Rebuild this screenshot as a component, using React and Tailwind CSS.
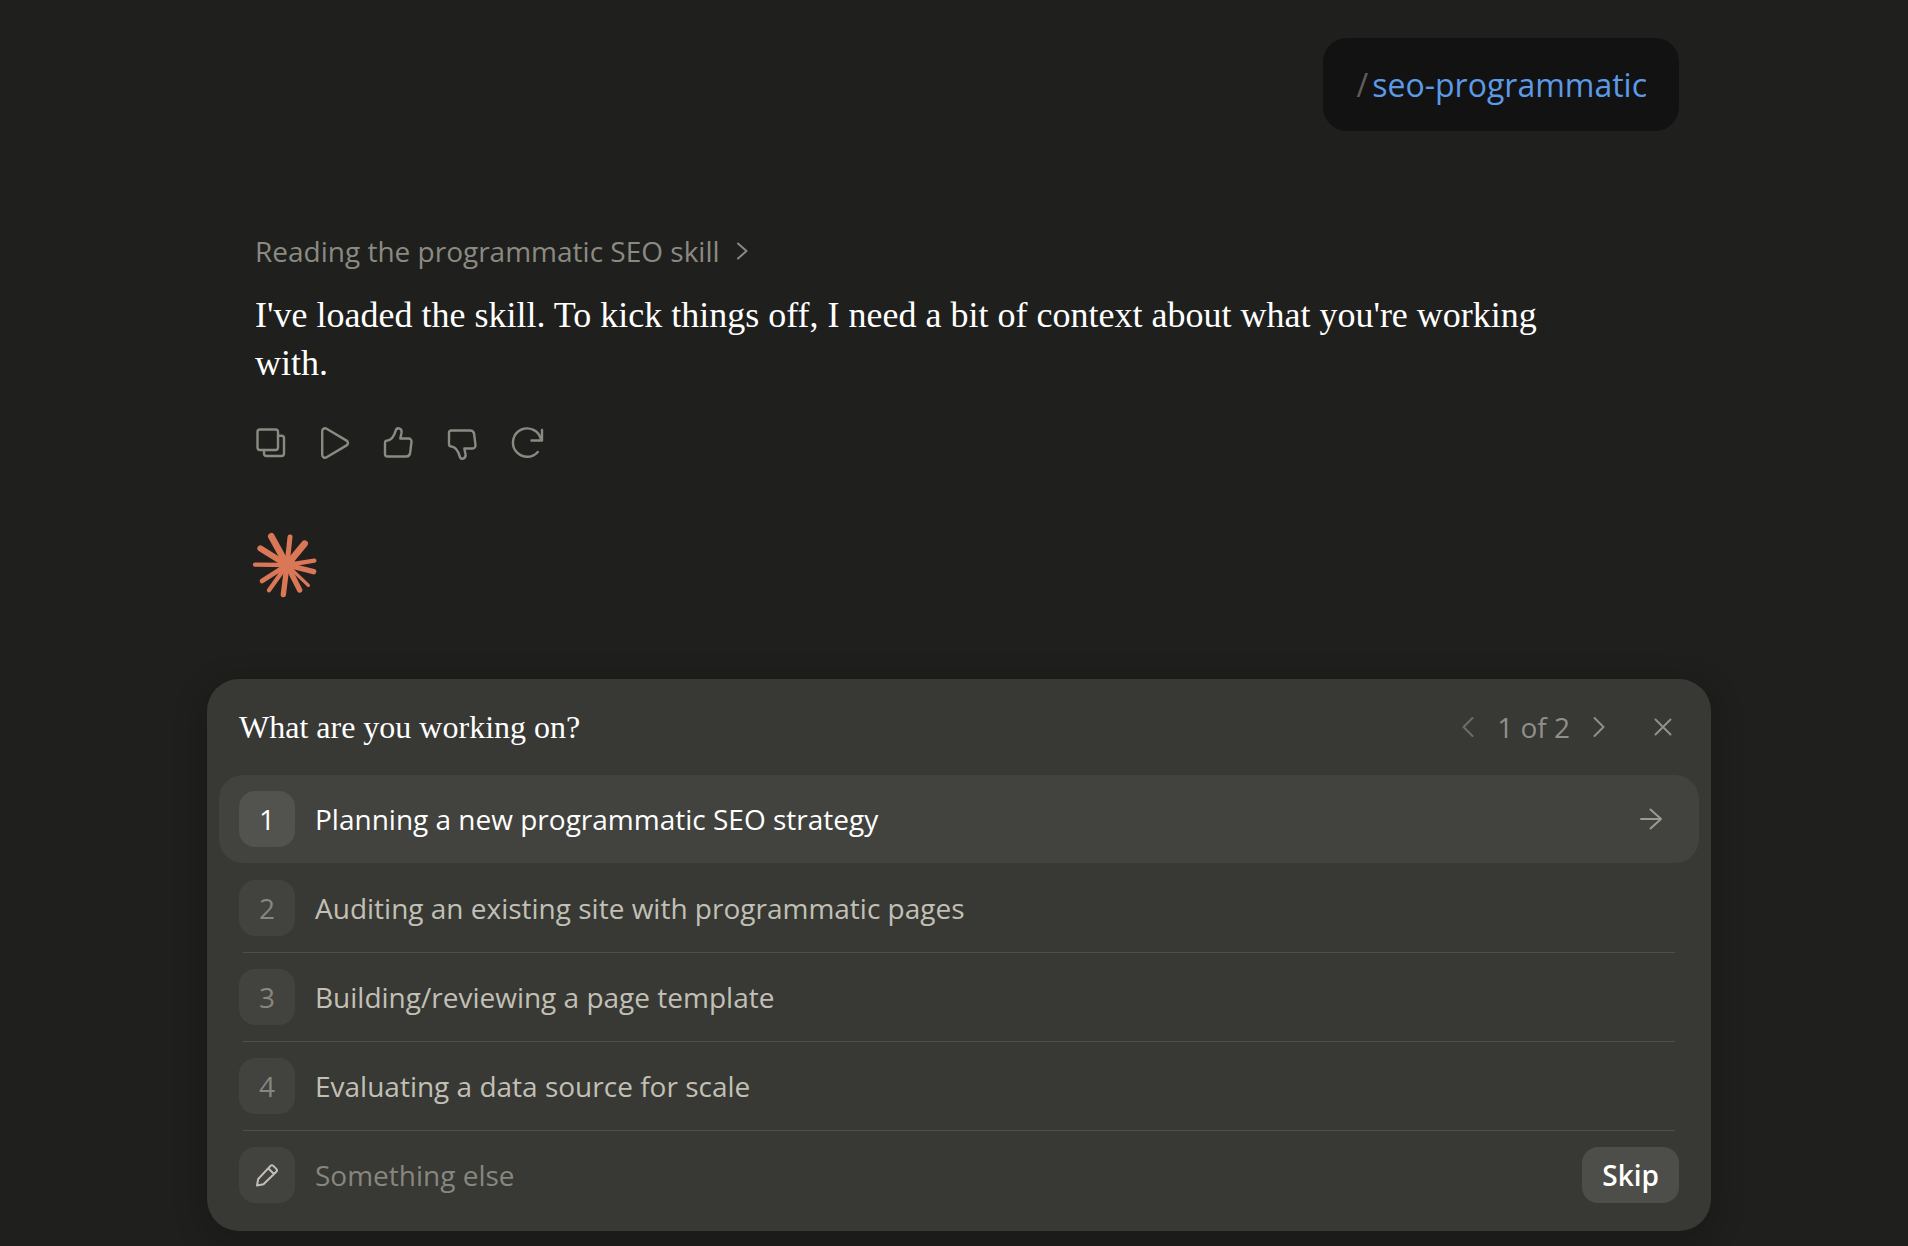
import React, { useState } from "react";

const OPTIONS = [
    "Planning a new programmatic SEO strategy",
    "Auditing an existing site with programmatic pages",
    "Building/reviewing a page template",
    "Evaluating a data source for scale",
];

// End point and thickness of every ray in the burst logo
const RAYS = [
    { x: 95, y: 45, w: 20 },
    { x: 151, y: 47, w: 15 },
    { x: 195, y: 67, w: 20 },
    { x: 224, y: 118, w: 13 },
    { x: 222, y: 151, w: 16 },
    { x: 206, y: 192, w: 10 },
    { x: 180, y: 206, w: 16 },
    { x: 131, y: 220, w: 16 },
    { x: 88, y: 207, w: 13 },
    { x: 67, y: 179, w: 14 },
    { x: 46, y: 130, w: 13 },
    { x: 62, y: 81, w: 18 },
];

function Icon({ className, children, width = 2, size = 40 }) {
    return (
        <svg
            className={className}
            width={size}
            height={size}
            viewBox={`0 0 ${size} ${size}`}
            fill="none"
            stroke="currentColor"
            strokeWidth={width}
            strokeLinecap="round"
            strokeLinejoin="round"
            aria-hidden="true"
        >
            {children}
        </svg>
    );
}

function BurstLogo() {
    return (
        <svg className="size-16 overflow-visible" viewBox="46 35 192 192" aria-hidden="true">
            <g stroke="#d97757" strokeLinecap="round">
                {RAYS.map((ray) => (
                    <line key={`${ray.x}-${ray.y}`} x1="142" y1="131" x2={ray.x} y2={ray.y} strokeWidth={ray.w} />
                ))}
            </g>
            <circle cx="142" cy="131" r="25" fill="#d97757" />
        </svg>
    );
}

const ACTIONS = [
    {
        label: "Copy",
        icon: (
            <>
                <rect x="6.500" y="6.500" width="20.5" height="20.5" rx="2.5" />
                <path d="M27 12.700H30.500a2.500 2.500 0 0 1 2.500 2.500V30.500a2.500 2.500 0 0 1-2.500 2.500H15.500a2.500 2.500 0 0 1-2.500-2.500V27" />
            </>
        ),
    },
    {
        label: "Play",
        icon: <path d="M7.200 8.200v23.600a2.900 2.900 0 0 0 4.400 2.500l20-11.900a2.800 2.800 0 0 0 0-4.800l-20-11.900a2.900 2.900 0 0 0-4.400 2.500Z" />,
    },
    {
        label: "Good response",
        icon: (
            <path d="M8.500 17.500c4.500-.5 6.500-4 8.200-9.800.6-2 2-2.700 3.400-2.300 2 .6 2.800 2.500 2.400 4.600L21.300 15.500h8.200c1.900 0 3.200 1.500 3 3.300l-1.400 11.200c-.3 2-1.900 3.500-4 3.500H8.500c-1.400 0-2.500-1.100-2.500-2.500V20c0-1.400 1.100-2.500 2.500-2.500Z" />
        ),
    },
    {
        label: "Bad response",
        icon: (
            <path d="M8.500 23.500c4.500.5 6.500 4 8.200 9.800.6 2 2 2.700 3.400 2.300 2-.6 2.800-2.500 2.400-4.600L21.300 25.500h8.200c1.900 0 3.200-1.500 3-3.300L31.100 11c-.3-2-1.900-3.500-4-3.500H8.500C7.100 7.500 6 8.600 6 10v11c0 1.400 1.100 2.500 2.500 2.500Z" />
        ),
    },
    {
        label: "Retry",
        icon: (
            <>
                <path d="M30.800 29A14.200 14.200 0 1 1 34 16.500" />
                <path d="M35 7v10.500H24.500" />
            </>
        ),
    },
];

export default function App() {
    const [selected, setSelected] = useState(0);

    return (
        <div className="min-h-screen bg-[#1f1f1d] pt-[38px] pb-[14px] pl-[10px] font-['Open_Sans',sans-serif] text-white">
            <main className="mx-auto w-full max-w-[1504px]">
                <div className="flex justify-end pr-8">
                    <div className="rounded-3xl bg-[#121212] py-[22px] pr-8 pl-[34px] text-[32px] leading-[49px] text-[#5c9ae6]">
                        <span className="mr-1 text-[#5e5d59]">/</span>seo-programmatic
                    </div>
                </div>

                <section className="mt-[100px] px-12">
                    <button type="button" className="flex items-center gap-[10px] text-[28px] leading-10 text-[#8b8a82]">
                        Reading the programmatic SEO skill
                        <Icon size={24}>
                            <path d="M8 4.500l8.500 7.500L8 19.500" />
                        </Icon>
                    </button>
                    <p className="mt-5 pr-20 font-['Liberation_Serif',serif] text-[36px] leading-[48px]">
                        I've loaded the skill. To kick things off, I need a bit of context about what you're working with.
                    </p>
                    <div className="mt-6 -ml-4 flex text-[#8b8a82]">
                        {ACTIONS.map((action) => (
                            <button key={action.label} type="button" aria-label={action.label} className="flex size-16 items-center justify-center">
                                <Icon width={2.4}>{action.icon}</Icon>
                            </button>
                        ))}
                    </div>
                    <div className="mt-[58px]">
                        <BurstLogo />
                    </div>
                </section>

                <section className="mt-[82px] rounded-[32px] bg-[#383834] p-3 shadow-[0_8px_24px_12px_rgba(0,0,0,0.12)]">
                    <header className="flex h-[84px] items-center justify-between pr-4 pb-3 pl-5">
                        <h2 className="font-['Liberation_Serif',serif] text-[32px] leading-10">What are you working on?</h2>
                        <div className="flex items-center text-[#918f88]">
                            <button type="button" aria-label="Previous question" disabled className="flex size-10 items-center justify-center opacity-60">
                                <Icon size={24}>
                                    <path d="M16.500 3L7.500 12l9 9" />
                                </Icon>
                            </button>
                            <span className="px-[9px] text-[28px] leading-10">1 of 2</span>
                            <button type="button" aria-label="Next question" className="flex size-10 items-center justify-center">
                                <Icon size={24}>
                                    <path d="M7.500 3l9 9-9 9" />
                                </Icon>
                            </button>
                            <button type="button" aria-label="Close" className="ml-6 flex size-10 items-center justify-center">
                                <Icon size={24}>
                                    <path d="M4.500 4.500l15 15M19.500 4.500l-15 15" />
                                </Icon>
                            </button>
                        </div>
                    </header>

                    <ul>
                        {OPTIONS.map((option, index) => {
                            const active = index === selected;
                            return (
                                <li key={option}>
                                    <button
                                        type="button"
                                        onClick={() => setSelected(index)}
                                        className={`flex h-[88px] w-full items-center gap-5 rounded-3xl pr-8 pl-5 text-left text-[28px] leading-10 ${active ? "bg-[#42423e] text-white" : "text-[#c2c0b6]"}`}
                                    >
                                        <span className={`flex size-14 items-center justify-center rounded-2xl ${active ? "bg-[#52524e] text-white" : "bg-[#42423e] text-[#87867f]"}`}>
                                            {index + 1}
                                        </span>
                                        <span className="flex-1">{option}</span>
                                        {active && (
                                            <Icon size={32} className="text-[#9c9a92]">
                                                <path d="M6 16h20M15.500 6.500L26 16 15.500 25.500" />
                                            </Icon>
                                        )}
                                    </button>
                                    <div className={`mx-6 h-px ${active ? "" : "bg-[#4f4f4a]"}`}></div>
                                </li>
                            );
                        })}
                    </ul>

                    <div className="flex h-[88px] items-center gap-5 px-5">
                        <label htmlFor="other" className="flex size-14 items-center justify-center rounded-2xl bg-[#42423e] text-[#c2c0b6]">
                            <Icon size={28}>
                                <path d="M4 24.500l1.200-6.500L17.500 4.900a2 2 0 0 1 2.800 0l3 3a2 2 0 0 1 0 2.800L10.500 23.300 4 24.500ZM15.500 7.500l5.200 5.200" />
                            </Icon>
                        </label>
                        <input
                            id="other"
                            type="text"
                            placeholder="Something else"
                            aria-label="Something else"
                            className="min-w-0 flex-1 bg-transparent text-[28px] leading-10 outline-none placeholder:text-[#87867f]"
                        />
                        <button type="button" className="h-14 rounded-2xl bg-[#4d4d49] px-5 text-[28px] leading-10 font-semibold">
                            Skip
                        </button>
                    </div>
                </section>
            </main>
        </div>
    );
}
